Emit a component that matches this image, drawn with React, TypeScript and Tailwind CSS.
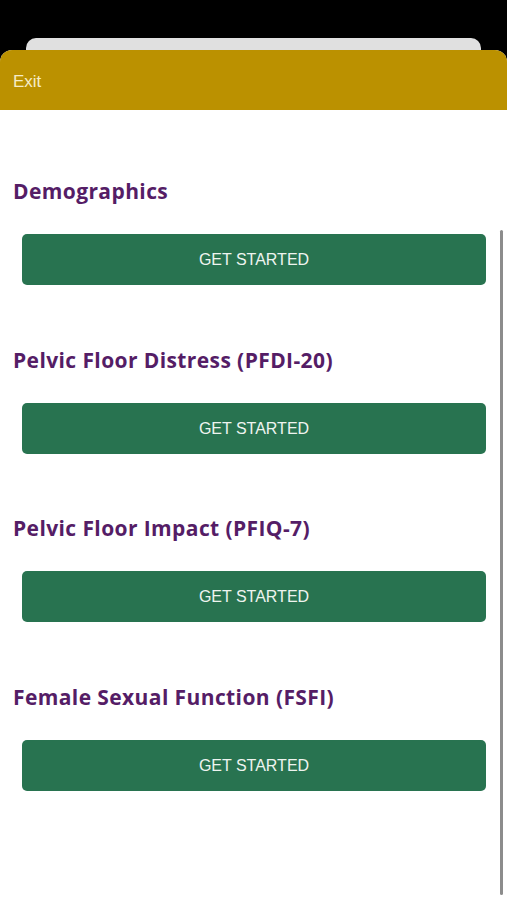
import React from 'react';

const surveys = [
    'Demographics',
    'Pelvic Floor Distress (PFDI-20)',
    'Pelvic Floor Impact (PFIQ-7)',
    'Female Sexual Function (FSFI)'
];

export default function App() {
    return (
        <div className="relative w-[507px] h-[900px] overflow-hidden bg-black">
            {/* Card peeking out behind the sheet */}
            <div className="h-[38px]" />
            <div className="mx-[26px] h-[24px] rounded-t-[10px] bg-[#e0e0e0]" />

            {/* Sheet */}
            <div className="-mt-[12px] relative bg-white h-[850px] rounded-t-[12px] overflow-hidden">
                <div className="h-[60px] bg-[#bb9100] flex items-center px-[13px]">
                    <span
                        className="text-[17px] text-[#f6ecc6] pt-[4px]"
                        style={{ fontFamily: '"Liberation Sans", Arial, sans-serif' }}
                    >
                        Exit
                    </span>
                </div>

                <div className="pt-[67px] flex flex-col">
                    {surveys.map((title) => (
                        <div key={title} className="mb-[60.5px]">
                            <h2
                                className="px-[13px] h-[28px] leading-[28px] text-[21px] font-bold text-[#551d66] tracking-[0.4px]"
                                style={{ fontFamily: '"Open Sans", sans-serif' }}
                            >
                                {title}
                            </h2>
                            <button
                                className="mt-[29px] ml-[22px] w-[464px] h-[51px] rounded-[5px] bg-[#287350] text-[#eef4ef] text-[16px] flex items-center justify-center pt-[1px]"
                                style={{ fontFamily: '"Liberation Sans", Arial, sans-serif' }}
                            >
                                GET STARTED
                            </button>
                        </div>
                    ))}
                </div>

                {/* Scrollbar */}
                <div className="absolute left-[500px] top-[180px] w-[3px] h-[665px] rounded-full bg-[#8c8c8c]" />
            </div>
        </div>
    );
}
